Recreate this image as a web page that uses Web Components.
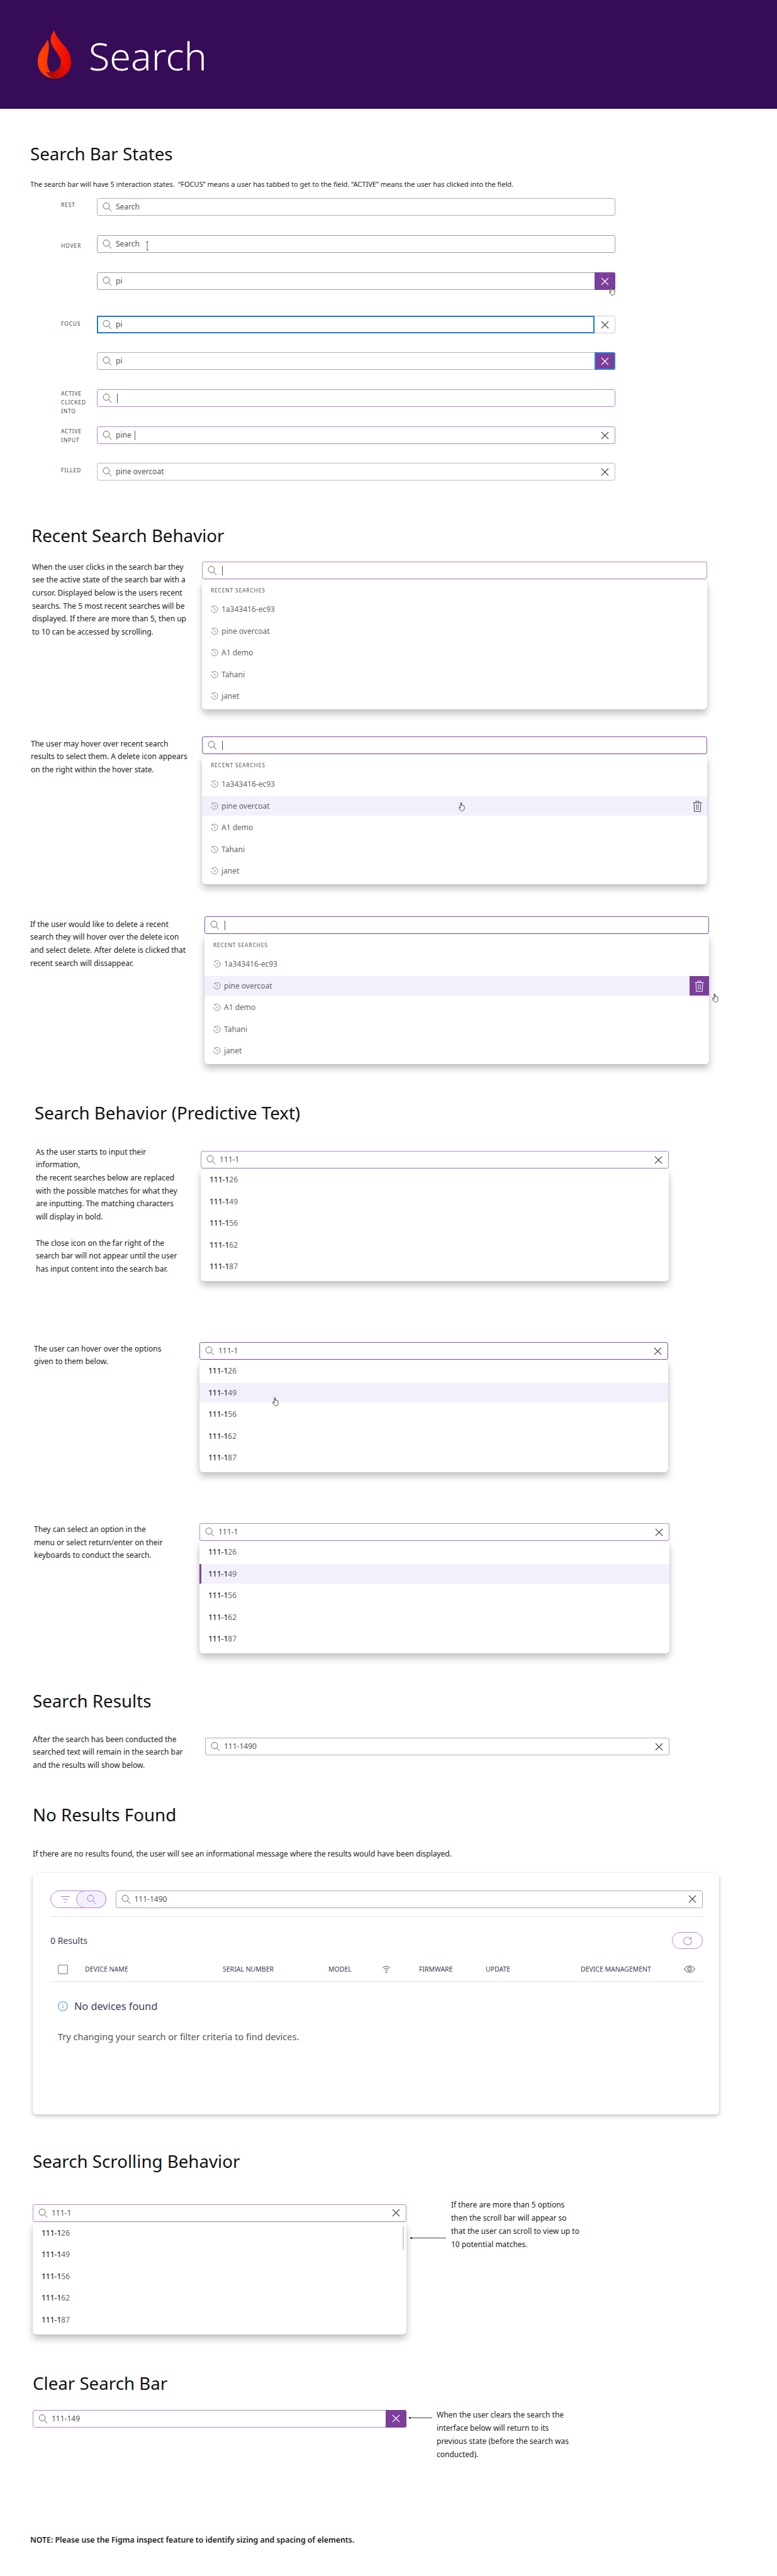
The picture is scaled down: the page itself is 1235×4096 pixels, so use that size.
<!DOCTYPE html>
<html>
<head>
<meta charset="utf-8">
<title>Search</title>
<style>
  html,body{margin:0;padding:0;background:#fff;}
  body{position:relative;height:4096px;overflow:hidden;font-family:"Noto Sans","Open Sans",sans-serif;color:#222;}
</style>
</head>
<body>
<spec-header>Search</spec-header>

<spec-heading style="margin:52px 0 0 48px">Search Bar States</spec-heading>
<spec-text style="margin:20px 0 0 48px;line-height:20px;font-size:11.05px">The search bar will have 5 interaction states.&nbsp; “FOCUS” means a user has tabbed to get to the field. “ACTIVE” means the user has clicked into the field.</spec-text>

<state-row style="margin-top:12px"><state-label slot="label" style="padding-top:4px">REST</state-label><search-bar state="rest" placeholder>Search</search-bar></state-row>
<state-row style="margin-top:31px"><state-label slot="label" style="padding-top:10px">HOVER</state-label><search-bar state="hover" placeholder>Search</search-bar></state-row>
<state-row style="margin-top:31px"><search-bar state="hover" clear="hover">pi</search-bar></state-row>
<state-row style="margin-top:41px"><state-label slot="label" style="padding-top:6px">FOCUS</state-label><search-bar state="focus" clear="plain">pi</search-bar></state-row>
<state-row style="margin-top:30px"><search-bar state="rest" clear="focus">pi</search-bar></state-row>
<state-row style="margin-top:31px"><state-label slot="label">ACTIVE<br>CLICKED<br>INTO</state-label><search-bar state="active" caret></search-bar></state-row>
<state-row style="margin-top:31px"><state-label slot="label" style="padding-top:1px">ACTIVE<br>INPUT</state-label><search-bar state="active" clear="plain" caret>pine&nbsp;</search-bar></state-row>
<state-row style="margin-top:30px"><state-label slot="label" style="padding-top:5px">FILLED</state-label><search-bar state="filled" clear="plain">pine overcoat</search-bar></state-row>

<spec-heading style="margin:68px 0 0 50px">Recent Search Behavior</spec-heading>

<spec-row style="margin:23px 0 0 51px;grid-template-columns:270px 803px">
  <spec-text slot="text" style="margin-top:-1.35px">When the user clicks in the search bar they<br>see the active state of the search bar with a<br>cursor. Displayed below is the users recent<br>searchs. The 5 most recent searches will be<br>displayed. If there are more than 5, then up<br>to 10 can be accessed by scrolling.</spec-text>
  <search-bar state="active" caret></search-bar>
  <search-menu label="RECENT SEARCHES">
    <menu-item clock>1a343416-ec93</menu-item>
    <menu-item clock>pine overcoat</menu-item>
    <menu-item clock>A1 demo</menu-item>
    <menu-item clock>Tahani</menu-item>
    <menu-item clock>janet</menu-item>
  </search-menu>
</spec-row>

<spec-row style="margin:43px 0 0 49px;grid-template-columns:272px 803px">
  <spec-text slot="text" style="margin-top:1.65px">The user may hover over recent search<br>results to select them. A delete icon appears<br>on the right within the hover state.</spec-text>
  <search-bar state="active-strong" caret></search-bar>
  <search-menu label="RECENT SEARCHES">
    <menu-item clock>1a343416-ec93</menu-item>
    <menu-item clock hover trash>pine overcoat</menu-item>
    <menu-item clock>A1 demo</menu-item>
    <menu-item clock>Tahani</menu-item>
    <menu-item clock>janet</menu-item>
  </search-menu>
</spec-row>

<spec-row style="margin:51px 0 0 48px;grid-template-columns:277px 802px">
  <spec-text slot="text" style="margin-top:2.65px">If the user would like to delete a recent<br>search they will hover over the delete icon<br>and select delete. After delete is clicked that<br>recent search will dissappear.</spec-text>
  <search-bar state="active-strong" caret></search-bar>
  <search-menu label="RECENT SEARCHES">
    <menu-item clock>1a343416-ec93</menu-item>
    <menu-item clock hover trash="on">pine overcoat</menu-item>
    <menu-item clock>A1 demo</menu-item>
    <menu-item clock>Tahani</menu-item>
    <menu-item clock>janet</menu-item>
  </search-menu>
</spec-row>

<spec-heading style="margin:58px 0 0 55px">Search Behavior (Predictive Text)</spec-heading>

<spec-row style="margin:42px 0 0 57px;grid-template-columns:262px 744px">
  <spec-text slot="text" style="margin-top:-8.35px">As the user starts to input their<br>information,<br>the recent searches below are replaced<br>with the possible matches for what they<br>are inputting. The matching characters<br>will display in bold.<br><br>The close icon on the far right of the<br>search bar will not appear until the user<br>has input content into the search bar.</spec-text>
  <search-bar state="active" clear="plain">111-1</search-bar>
  <search-menu>
    <menu-item><b>111-1</b>26</menu-item>
    <menu-item><b>111-1</b>49</menu-item>
    <menu-item><b>111-1</b>56</menu-item>
    <menu-item><b>111-1</b>62</menu-item>
    <menu-item><b>111-1</b>87</menu-item>
  </search-menu>
</spec-row>

<spec-row style="margin:97px 0 0 54px;grid-template-columns:263px 745px">
  <spec-text slot="text" style="margin-top:.65px">The user can hover over the options<br>given to them below.</spec-text>
  <search-bar state="active-strong" clear="plain">111-1</search-bar>
  <search-menu>
    <menu-item><b>111-1</b>26</menu-item>
    <menu-item hover><b>111-1</b>49</menu-item>
    <menu-item><b>111-1</b>56</menu-item>
    <menu-item><b>111-1</b>62</menu-item>
    <menu-item><b>111-1</b>87</menu-item>
  </search-menu>
</spec-row>

<spec-row style="margin:81px 0 0 54px;grid-template-columns:263px 747px">
  <spec-text slot="text">They can select an option in the<br>menu or select return/enter on their<br>keyboards to conduct the search.</spec-text>
  <search-bar state="active" clear="plain">111-1</search-bar>
  <search-menu>
    <menu-item><b>111-1</b>26</menu-item>
    <menu-item selected><b>111-1</b>49</menu-item>
    <menu-item><b>111-1</b>56</menu-item>
    <menu-item><b>111-1</b>62</menu-item>
    <menu-item><b>111-1</b>87</menu-item>
  </search-menu>
</spec-row>

<spec-heading style="margin:56px 0 0 52px">Search Results</spec-heading>

<spec-row style="margin:40px 0 0 52px;grid-template-columns:274px 738px">
  <spec-text slot="text" style="margin-top:-7.35px">After the search has been conducted the<br>searched text will remain in the search bar<br>and the results will show below.</spec-text>
  <search-bar state="rest" clear="plain">111-1490</search-bar>
</spec-row>

<spec-heading style="margin:48px 0 0 52px">No Results Found</spec-heading>
<spec-text style="margin:34px 0 0 52px;line-height:20px">If there are no results found, the user will see an informational message where the results would have been displayed.</spec-text>

<results-card style="margin:20px 0 0 52px"></results-card>

<spec-heading style="margin:55px 0 0 52px">Search Scrolling Behavior</spec-heading>

<note-row style="margin:50px 0 0 52px">
  <search-bar state="active" clear="plain">111-1</search-bar>
  <search-menu scroll>
    <menu-item><b>111-1</b>26</menu-item>
    <menu-item><b>111-1</b>49</menu-item>
    <menu-item><b>111-1</b>56</menu-item>
    <menu-item><b>111-1</b>62</menu-item>
    <menu-item><b>111-1</b>87</menu-item>
  </search-menu>
  <note-arrow slot="note" style="margin:53px 8px 0 6px;width:57px"></note-arrow>
  <spec-text slot="note" style="margin-top:-8.35px">If there are more than 5 options<br>then the scroll bar will appear so<br>that the user can scroll to view up to<br>10 potential matches.</spec-text>
</note-row>

<spec-heading style="margin:58px 0 0 52px">Clear Search Bar</spec-heading>

<note-row style="margin:24px 0 0 52px">
  <search-bar state="active" clear="hover">111-149</search-bar>
  <note-arrow slot="note" style="margin:12px 7px 0 4px;width:37px"></note-arrow>
  <spec-text slot="note" style="margin-top:-1.35px">When the user clears the search the<br>interface below will return to its<br>previous state (before the search was<br>conducted).</spec-text>
</note-row>

<spec-text style="margin:115.5px 0 0 48px;line-height:20px;font-weight:600;font-size:12.3px">NOTE: Please use the Figma inspect feature to identify sizing and spacing of elements.</spec-text>

<!-- pointers lying over the content -->
<text-cursor style="left:231px;top:384px"></text-cursor>
<hand-cursor style="left:968px;top:455px"></hand-cursor>
<hand-cursor style="left:729px;top:1275px"></hand-cursor>
<hand-cursor style="left:1132px;top:1579px"></hand-cursor>
<hand-cursor style="left:433px;top:2221px"></hand-cursor>

<script>
// shared icons
const ICON_SEARCH = `<svg width="15" height="16" viewBox="0 0 15 16" fill="none" stroke="currentColor" stroke-width="1"><circle cx="6" cy="6.5" r="5"/><path d="M9.6 10.2 14 15"/></svg>`
const ICON_X = `<svg width="13" height="13" viewBox="0 0 13 13" fill="none" stroke="currentColor" stroke-width="1.1"><path d="M1 1l11 11M12 1 1 12"/></svg>`
const ICON_CLOCK = `<svg width="12" height="12" viewBox="0 0 12 12" fill="none" stroke="currentColor" stroke-width=".9"><path d="M2.2 2.1A5.2 5.2 0 1 1 .8 6"/><path d="M2 .6v1.7h1.7M6 3.2v3l1.8 1.2"/></svg>`
const ICON_TRASH = `<svg width="15" height="18" viewBox="0 0 15 18" fill="none" stroke="currentColor" stroke-width="1"><path d="M.5 3.5h14M5 3.3V1h5v2.3M2.2 3.5l.4 13.8h9.8l.4-13.8M6 6v8.8M9 6v8.8"/></svg>`

class SpecHeader extends HTMLElement{
    constructor(){
        super()
        this.attachShadow({mode: "open"})
        this.shadowRoot.innerHTML = `
            <style>
                :host{display:flex;align-items:center;gap:28px;height:173px;padding-left:60px;background:#360c58;box-sizing:border-box;}
                svg{display:block;}
                span{font:300 61px/1 "Noto Sans","Open Sans",sans-serif;color:#fff;margin-top:4px;}
            </style>
            <svg width="53" height="77" viewBox="0 145 158 228">
                <defs>
                    <linearGradient id="fl" x1="0" x2="1"><stop offset="0" stop-color="#ff4300"/><stop offset="1" stop-color="#f02a00"/></linearGradient>
                    <linearGradient id="fr" x1="0" x2="1"><stop offset="0" stop-color="#ff2a00"/><stop offset="1" stop-color="#e80600"/></linearGradient>
                    <linearGradient id="fd" x1="0" x2="1"><stop offset="0" stop-color="#8c0d12"/><stop offset=".7" stop-color="#d80d00"/><stop offset="1" stop-color="#ee0a00"/></linearGradient>
                </defs>
                <path fill="url(#fl)" d="M47 187C38 218 0 240 0 295c0 44 35 78 80 78 12 0 24-3 33-8-35 6-68-24-68-70 0-38 17-62 2-108z"/>
                <path fill="url(#fr)" d="M78 145c-24 32-20 60 0 88 14 20 32 40 32 64 0 14-4 24-12 32l-20 44h2c44 0 78-34 78-78 0-72-64-90-80-150z"/>
                <path fill="url(#fd)" d="M110 297c0 36-40 52-72 44 14 20 28 32 42 32 22 0 44-8 58-28-6-22-18-34-28-48z"/>
            </svg>
            <span><slot></slot></span>
        `
    }
}
customElements.define('spec-header', SpecHeader)

class SpecHeading extends HTMLElement{
    constructor(){
        super()
        this.attachShadow({mode: "open"})
        this.shadowRoot.innerHTML = `
            <style>
                :host{display:block;font:400 27.7px/38px "Noto Sans","Open Sans",sans-serif;color:#111;white-space:nowrap;}
            </style>
            <slot></slot>
        `
    }
}
customElements.define('spec-heading', SpecHeading)

class SpecText extends HTMLElement{
    constructor(){
        super()
        this.attachShadow({mode: "open"})
        this.shadowRoot.innerHTML = `
            <style>
                :host{display:block;font:400 12px/20.7px "Noto Sans","Open Sans",sans-serif;color:#222;white-space:nowrap;}
            </style>
            <slot></slot>
        `
    }
}
customElements.define('spec-text', SpecText)

class StateLabel extends HTMLElement{
    constructor(){
        super()
        this.attachShadow({mode: "open"})
        this.shadowRoot.innerHTML = `
            <style>
                :host{display:block;font:400 8.5px/14px "Noto Sans","Open Sans",sans-serif;letter-spacing:.8px;color:#444;white-space:nowrap;}
            </style>
            <slot></slot>
        `
    }
}
customElements.define('state-label', StateLabel)

class StateRow extends HTMLElement{
    constructor(){
        super()
        this.attachShadow({mode: "open"})
        this.shadowRoot.innerHTML = `
            <style>
                :host{display:grid;grid-template-columns:57px 824px;height:28px;margin-left:97px;}
            </style>
            <div><slot name="label"></slot></div>
            <div><slot></slot></div>
        `
    }
}
customElements.define('state-row', StateRow)

class SpecRow extends HTMLElement{
    constructor(){
        super()
        this.attachShadow({mode: "open"})
        this.shadowRoot.innerHTML = `
            <style>
                :host{display:grid;align-items:start;}
            </style>
            <div><slot name="text"></slot></div>
            <div><slot></slot></div>
        `
    }
}
customElements.define('spec-row', SpecRow)

class NoteRow extends HTMLElement{
    constructor(){
        super()
        this.attachShadow({mode: "open"})
        this.shadowRoot.innerHTML = `
            <style>
                :host{display:grid;grid-template-columns:594px auto;align-items:start;}
                .note{display:flex;align-items:flex-start;}
            </style>
            <div><slot></slot></div>
            <div class="note"><slot name="note"></slot></div>
        `
    }
}
customElements.define('note-row', NoteRow)

class NoteArrow extends HTMLElement{
    constructor(){
        super()
        this.attachShadow({mode: "open"})
        this.shadowRoot.innerHTML = `
            <style>
                :host{display:block;height:1px;background:#444;position:relative;flex:none;}
                i{position:absolute;left:0;top:-1px;width:3px;height:3px;border-radius:50%;background:#222;}
            </style>
            <i></i>
        `
    }
}
customElements.define('note-arrow', NoteArrow)

class SearchBar extends HTMLElement{
    constructor(){
        super()
        this.attachShadow({mode: "open"})
        this.shadowRoot.innerHTML = `
            <style>
                :host{display:block;height:28px;position:relative;font:400 12px/1 "Noto Sans","Open Sans",sans-serif;}
                .box{display:flex;align-items:center;height:28px;box-sizing:border-box;border:1px solid #b0a8cc;border-radius:3px;padding-left:8px;background:#fff;position:relative;}
                .mag{display:flex;color:#666;margin-right:6px;}
                .val{color:#555;white-space:pre;}
                .caret{display:none;width:1px;height:15px;background:#555;margin-left:2px;}
                .x{display:none;position:absolute;top:-1px;right:-1px;bottom:-1px;width:33px;align-items:center;justify-content:center;color:#444;box-sizing:border-box;border-radius:0 3px 3px 0;}
                :host([caret]) .caret{display:block;}
                :host([clear]) .x{display:flex;}
                :host([state=hover]) .box{border-color:#9f94b8;}
                :host([state=filled]) .box{border-color:#c0bad6;}
                :host([state=active]) .box{border-color:#b587cf;}
                :host([state=active-strong]) .box{border-color:#8a4fa8;}
                :host([clear=hover]) .x,:host([clear=focus]) .x{background:#7b3f9a;color:#fff;}
                :host([clear=focus]) .x{border:2px solid #2a7de1;}
                :host([state=focus]) .box::before{content:"";position:absolute;left:-1px;top:-1px;bottom:-1px;right:32px;border:2px solid #1b7ae0;box-sizing:border-box;}
                :host([state=focus]) .box{border-color:#d0ccdf;}
            </style>
            <div class="box">
                <span class="mag">${ICON_SEARCH}</span>
                <span class="val"><slot></slot></span>
                <span class="caret"></span>
                <span class="x">${ICON_X}</span>
            </div>
        `
    }
}
customElements.define('search-bar', SearchBar)

class SearchMenu extends HTMLElement{
    constructor(){
        super()
        this.attachShadow({mode: "open"})
        this.shadowRoot.innerHTML = `
            <style>
                :host{display:block;margin-top:1px;background:#fff;border-radius:6px;box-shadow:0 7px 12px rgba(0,0,0,.24),0 0 4px rgba(0,0,0,.08);position:relative;padding:1.5px 0 7.5px;}
                :host([label]){padding:10px 0 5.5px;}
                .label{display:none;font:400 8.5px/14px "Noto Sans","Open Sans",sans-serif;letter-spacing:.8px;color:#555;padding-left:14px;margin-bottom:7.5px;}
                :host([label]) .label{display:block;}
                .list{display:flex;flex-direction:column;gap:3.5px;}
                .bar{display:none;position:absolute;right:4px;top:6px;width:2.5px;height:38px;background:#cfcfcf;border-radius:2px;}
                :host([scroll]) .bar{display:block;}
            </style>
            <div class="label"></div>
            <div class="list"><slot></slot></div>
            <div class="bar"></div>
        `
    }
    connectedCallback(){
        this.shadowRoot.querySelector('.label').textContent = this.getAttribute('label') || ''
    }
}
customElements.define('search-menu', SearchMenu)

class MenuItem extends HTMLElement{
    constructor(){
        super()
        this.attachShadow({mode: "open"})
        this.shadowRoot.innerHTML = `
            <style>
                :host{display:flex;align-items:center;height:31px;padding-left:14px;position:relative;font:400 12px/1 "Noto Sans","Open Sans",sans-serif;color:#666;}
                ::slotted(b){font-weight:500;color:#333;}
                .clock{display:none;color:#777;margin-right:5px;}
                :host([clock]) .clock{display:flex;}
                :host([hover]),:host([selected]){background:#f3f0fc;}
                :host([selected])::before{content:"";position:absolute;left:0;top:0;bottom:0;width:3px;background:#7b3f9a;}
                .del{display:none;position:absolute;right:0;top:0;bottom:0;width:31px;align-items:center;justify-content:center;color:#444;}
                :host([trash]) .del{display:flex;}
                :host([trash=on]) .del{background:#7b3f9a;color:#fff;}
            </style>
            <span class="clock">${ICON_CLOCK}</span>
            <span><slot></slot></span>
            <span class="del">${ICON_TRASH}</span>
        `
    }
}
customElements.define('menu-item', MenuItem)

class ResultsCard extends HTMLElement{
    constructor(){
        super()
        this.attachShadow({mode: "open"})
        this.shadowRoot.innerHTML = `
            <style>
                :host{display:block;box-sizing:border-box;width:1091px;height:384px;padding:28px 26px 0 28px;background:#fff;border-radius:6px;box-shadow:0 3px 6px rgba(0,0,0,.22),0 0 3px rgba(0,0,0,.07);font-family:"Noto Sans","Open Sans",sans-serif;color:#3f3d56;}
                .top{display:flex;gap:14.5px;}
                search-bar{flex:1;}
                .toggle{flex:none;width:89px;height:28px;position:relative;box-sizing:border-box;border:1px solid #b884dc;border-radius:14px;color:#a86cd6;}
                .toggle .flt{position:absolute;left:16px;top:7px;}
                .toggle .on{position:absolute;right:-1px;top:-1px;width:48px;height:28px;box-sizing:border-box;border:1px solid #b884dc;border-radius:14px;background:#f3f0fc;display:flex;align-items:center;justify-content:center;}
                .rule{height:1.5px;background:#e3e3e3;margin-top:13px;}
                .count{display:flex;justify-content:space-between;align-items:center;height:27px;margin-top:24px;font-size:14px;}
                .refresh{width:49px;height:27px;box-sizing:border-box;border:1px solid #b884dc;border-radius:14px;display:flex;align-items:center;justify-content:center;color:#b884dc;}
                .cols{display:grid;grid-template-columns:55px 219px 168px 85px 59px 106px 151px 160px 34px;align-items:center;height:38px;margin-top:13px;border-bottom:1.5px solid #e3e3e3;font-size:10.5px;white-space:nowrap;}
                .check{width:16px;height:15px;margin-left:12px;box-sizing:border-box;border:1.5px solid #777;border-radius:2px;}
                .cols svg{display:block;}
                .eye{margin-left:4px;}
                .info{display:flex;align-items:center;gap:10px;margin:27px 0 0 12px;height:24px;font-size:16.3px;}
                .hint{margin:26px 0 0 12px;font-size:14.5px;line-height:20px;color:#555;}
            </style>
            <div class="top">
                <div class="toggle">
                    <svg class="flt" width="14" height="12" viewBox="0 0 14 12" fill="none" stroke="currentColor" stroke-width="1.2"><path d="M0 1.5h14M3 6h8M5.5 10.5h3"/></svg>
                    <span class="on">${ICON_SEARCH}</span>
                </div>
                <search-bar state="rest" clear="plain">111-1490</search-bar>
            </div>
            <div class="rule"></div>
            <div class="count">
                <span>0 Results</span>
                <span class="refresh"><svg width="16" height="16" viewBox="0 0 16 16" fill="none" stroke="currentColor" stroke-width="1.1"><path d="M13.5 5.2A6.3 6.3 0 1 0 14.3 8"/><path d="M13.8 1.8v3.6h-3.6"/></svg></span>
            </div>
            <div class="cols">
                <span class="check"></span>
                <span>DEVICE NAME</span>
                <span>SERIAL NUMBER</span>
                <span>MODEL</span>
                <span><svg width="14" height="14" viewBox="0 0 14 14" fill="none" stroke="#555" stroke-width="1"><path d="M1 5a8.5 8.5 0 0 1 12 0M3 7.2a5.6 5.6 0 0 1 8 0M5 9.3a2.8 2.8 0 0 1 4 0"/><circle cx="7" cy="12" r=".8" fill="#555"/></svg></span>
                <span>FIRMWARE</span>
                <span>UPDATE</span>
                <span>DEVICE MANAGEMENT</span>
                <span class="eye"><svg width="18" height="12" viewBox="0 0 18 12" fill="none" stroke="#333" stroke-width="1"><path d="M.7 6C3 2.5 6 1 9 1s6 1.5 8.3 5C15 9.5 12 11 9 11S3 9.5.7 6z"/><circle cx="9" cy="6" r="2.8"/></svg></span>
            </div>
            <div class="info">
                <svg width="16" height="16" viewBox="0 0 16 16" fill="none" stroke="#4a94e0" stroke-width="1.1"><circle cx="8" cy="8" r="7.3"/><path d="M8 7v4.5M8 4.3v1.2"/></svg>
                <span>No devices found</span>
            </div>
            <div class="hint">Try changing your search or filter criteria to find devices.</div>
        `
    }
}
customElements.define('results-card', ResultsCard)

class HandCursor extends HTMLElement{
    constructor(){
        super()
        this.attachShadow({mode: "open"})
        this.shadowRoot.innerHTML = `
            <style>
                :host{display:block;position:absolute;width:11px;height:15px;}
                svg{display:block;}
            </style>
            <svg width="11" height="15" viewBox="0 0 11 15" fill="#fff" stroke="#333" stroke-width=".9"><path d="M3 1.8c0-1 1.5-1 1.5 0V6l.2-1c.3-.9 1.4-.7 1.4.2l.1.8c.2-.8 1.4-.7 1.4.2v.6c.3-.7 1.4-.6 1.4.3V10c0 2.5-1.5 4.3-3.7 4.3-1.8 0-2.7-.8-3.4-2.2L.6 8.900c-.4-.9.7-1.5 1.3-.7l1.100 1.500z"/></svg>
        `
    }
}
customElements.define('hand-cursor', HandCursor)

class TextCursor extends HTMLElement{
    constructor(){
        super()
        this.attachShadow({mode: "open"})
        this.shadowRoot.innerHTML = `
            <style>
                :host{display:block;position:absolute;width:6px;height:14px;}
                svg{display:block;}
            </style>
            <svg width="6" height="14" viewBox="0 0 6 14" fill="none" stroke="#666" stroke-width="1"><path d="M1 .5h4M3 .5v13M1 13.5h4"/></svg>
        `
    }
}
customElements.define('text-cursor', TextCursor)
</script>
</body>
</html>
